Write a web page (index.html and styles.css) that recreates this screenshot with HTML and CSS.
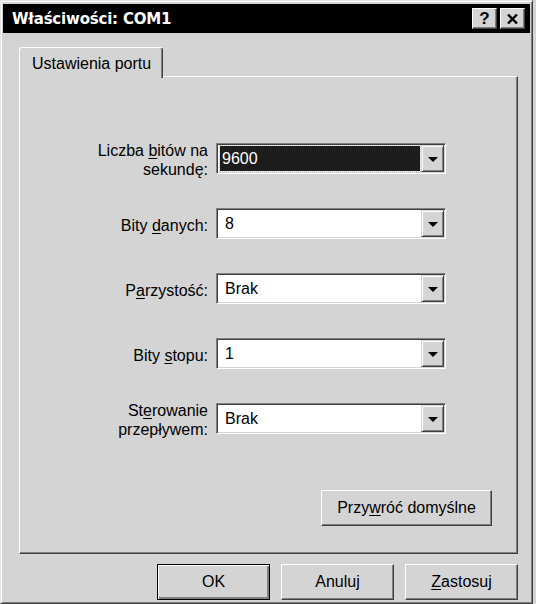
FILE: index.html
```html
<!DOCTYPE html>
<html lang="pl">
<head>
    <meta charset="UTF-8">
    <title>Właściwości: COM1</title>
    <link rel="stylesheet" href="styles.css">
</head>
<body>
    <div class="window">
        <div class="titlebar">
            <span class="title">Właściwości: COM1</span>
            <div class="title-buttons">
                <span class="title-btn help">?</span>
                <span class="title-btn close">
                    <svg width="11" height="10" viewBox="0 0 11 10"><path d="M1 0.5 L10 9.5 M10 0.5 L1 9.5" stroke="#000" stroke-width="2.4"/></svg>
                </span>
            </div>
        </div>

        <div class="content">
            <div class="tabs">
                <div class="tab active">Ustawienia portu</div>
            </div>

            <div class="page">
                <div class="form">
                    <label class="label"><span>Liczba <u>b</u>itów na<br>sekundę:</span></label>
                    <div class="combo">
                        <span class="value selected">9600</span>
                        <span class="drop"><span class="arrow"></span></span>
                    </div>

                    <label class="label"><span>Bity <u>d</u>anych:</span></label>
                    <div class="combo">
                        <span class="value">8</span>
                        <span class="drop"><span class="arrow"></span></span>
                    </div>

                    <label class="label"><span>P<u>a</u>rzystość:</span></label>
                    <div class="combo">
                        <span class="value">Brak</span>
                        <span class="drop"><span class="arrow"></span></span>
                    </div>

                    <label class="label"><span>Bity <u>s</u>topu:</span></label>
                    <div class="combo">
                        <span class="value">1</span>
                        <span class="drop"><span class="arrow"></span></span>
                    </div>

                    <label class="label"><span>St<u>e</u>rowanie<br>przepływem:</span></label>
                    <div class="combo">
                        <span class="value">Brak</span>
                        <span class="drop"><span class="arrow"></span></span>
                    </div>
                </div>

                <div class="page-actions">
                    <button class="btn wide">Przy<u>w</u>róć domyślne</button>
                </div>
            </div>

            <div class="actions">
                <button class="btn default">OK</button>
                <button class="btn">Anuluj</button>
                <button class="btn"><u>Z</u>astosuj</button>
            </div>
        </div>
    </div>
</body>
</html>
```

FILE: styles.css
```css
body {
    margin: 0;
    background-color: #d4d4d4;
    font-family: "Liberation Sans", Arial, sans-serif;
    font-size: 16px;
    color: #000;
    overflow: hidden;
}
u {
    text-underline-offset: 2px;
}
.window {
    box-sizing: border-box;
    width: 533px;
    height: 604px;
    padding: 3px 2px 0 2px;
    background-color: #d4d4d4;
    border: 1px solid;
    border-color: #e4e4e4 #404040 #404040 #e4e4e4;
    box-shadow: inset 1px 1px #fff, inset -1px -1px #808080;
}
.titlebar {
    height: 29px;
    background-color: #000;
    color: #fff;
    display: flex;
    align-items: center;
    justify-content: space-between;
    padding: 0 5px 0 9px;
}
.title {
    font-family: "DejaVu Sans", Verdana, sans-serif;
    font-weight: bold;
    font-size: 15px;
    letter-spacing: -0.2px;
}
.title-buttons {
    display: flex;
    gap: 3px;
}
.title-btn {
    box-sizing: border-box;
    width: 25px;
    height: 21px;
    display: flex;
    align-items: center;
    justify-content: center;
    background-color: #d4d4d4;
    color: #000;
    border: 1px solid;
    border-color: #fff #404040 #404040 #fff;
    box-shadow: inset -1px -1px #808080;
}
.title-btn.help {
    font-weight: bold;
    font-size: 17px;
}
.content {
    padding: 14px 12px 0 16px;
}
.tabs {
    display: flex;
    position: relative;
    z-index: 1;
    margin-bottom: -2px;
}
.tab {
    box-sizing: border-box;
    width: 144px;
    height: 31px;
    padding: 7px 0 0 12px;
    background-color: #d4d4d4;
    border: 1px solid;
    border-bottom: none;
    border-color: #fff #404040 #404040 #fff;
    border-radius: 3px 3px 0 0;
    box-shadow: inset -1px 0 #808080;
}
.page {
    border: 1px solid;
    border-color: #fff #404040 #404040 #fff;
    box-shadow: inset -1px -1px #808080;
    padding: 66px 25px 27px 38px;
}
.form {
    display: grid;
    grid-template-columns: 150px 230px;
    grid-auto-rows: 31px;
    column-gap: 8px;
    row-gap: 34px;
}
.label {
    display: flex;
    align-items: center;
    justify-content: flex-end;
    text-align: right;
    line-height: 19px;
    white-space: nowrap;
    padding-top: 3px;
}
.combo {
    box-sizing: border-box;
    display: flex;
    height: 31px;
    padding: 1px;
    background-color: #fff;
    border: 1px solid;
    border-color: #808080 #fff #fff #808080;
    box-shadow: inset 1px 1px #404040, inset -1px -1px #d4d4d4;
}
.value {
    flex: 1;
    display: flex;
    align-items: center;
    padding-left: 5px;
    margin: 1px 1px 1px 2px;
}
.value.selected {
    background-color: #1c1c1c;
    color: #fff;
    outline: 1px dotted #c8c8c8;
    padding-left: 2px;
}
.drop {
    box-sizing: border-box;
    width: 23px;
    display: flex;
    align-items: center;
    justify-content: center;
    background-color: #d4d4d4;
    border: 1px solid;
    border-color: #d4d4d4 #404040 #404040 #d4d4d4;
    box-shadow: inset 1px 1px #fff, inset -1px -1px #808080;
}
.arrow {
    width: 0;
    height: 0;
    border-left: 5px solid transparent;
    border-right: 5px solid transparent;
    border-top: 5px solid #000;
    margin-top: 1px;
}
.page-actions {
    display: flex;
    justify-content: flex-end;
    margin-top: 56px;
}
.btn {
    box-sizing: border-box;
    width: 113px;
    height: 36px;
    padding: 0;
    font-family: "Liberation Sans", Arial, sans-serif;
    font-size: 16px;
    color: #000;
    background-color: #d4d4d4;
    border: 1px solid;
    border-color: #fff #404040 #404040 #fff;
    box-shadow: inset -1px -1px #808080;
}
.btn.wide {
    width: 171px;
}
.btn.default {
    border: 1px solid #000;
    box-shadow: inset 1px 1px #fff, inset -2px -2px #808080, inset -1px -1px #404040;
}
.actions {
    display: flex;
    justify-content: flex-end;
    gap: 11px;
    margin-top: 10px;
}
```
